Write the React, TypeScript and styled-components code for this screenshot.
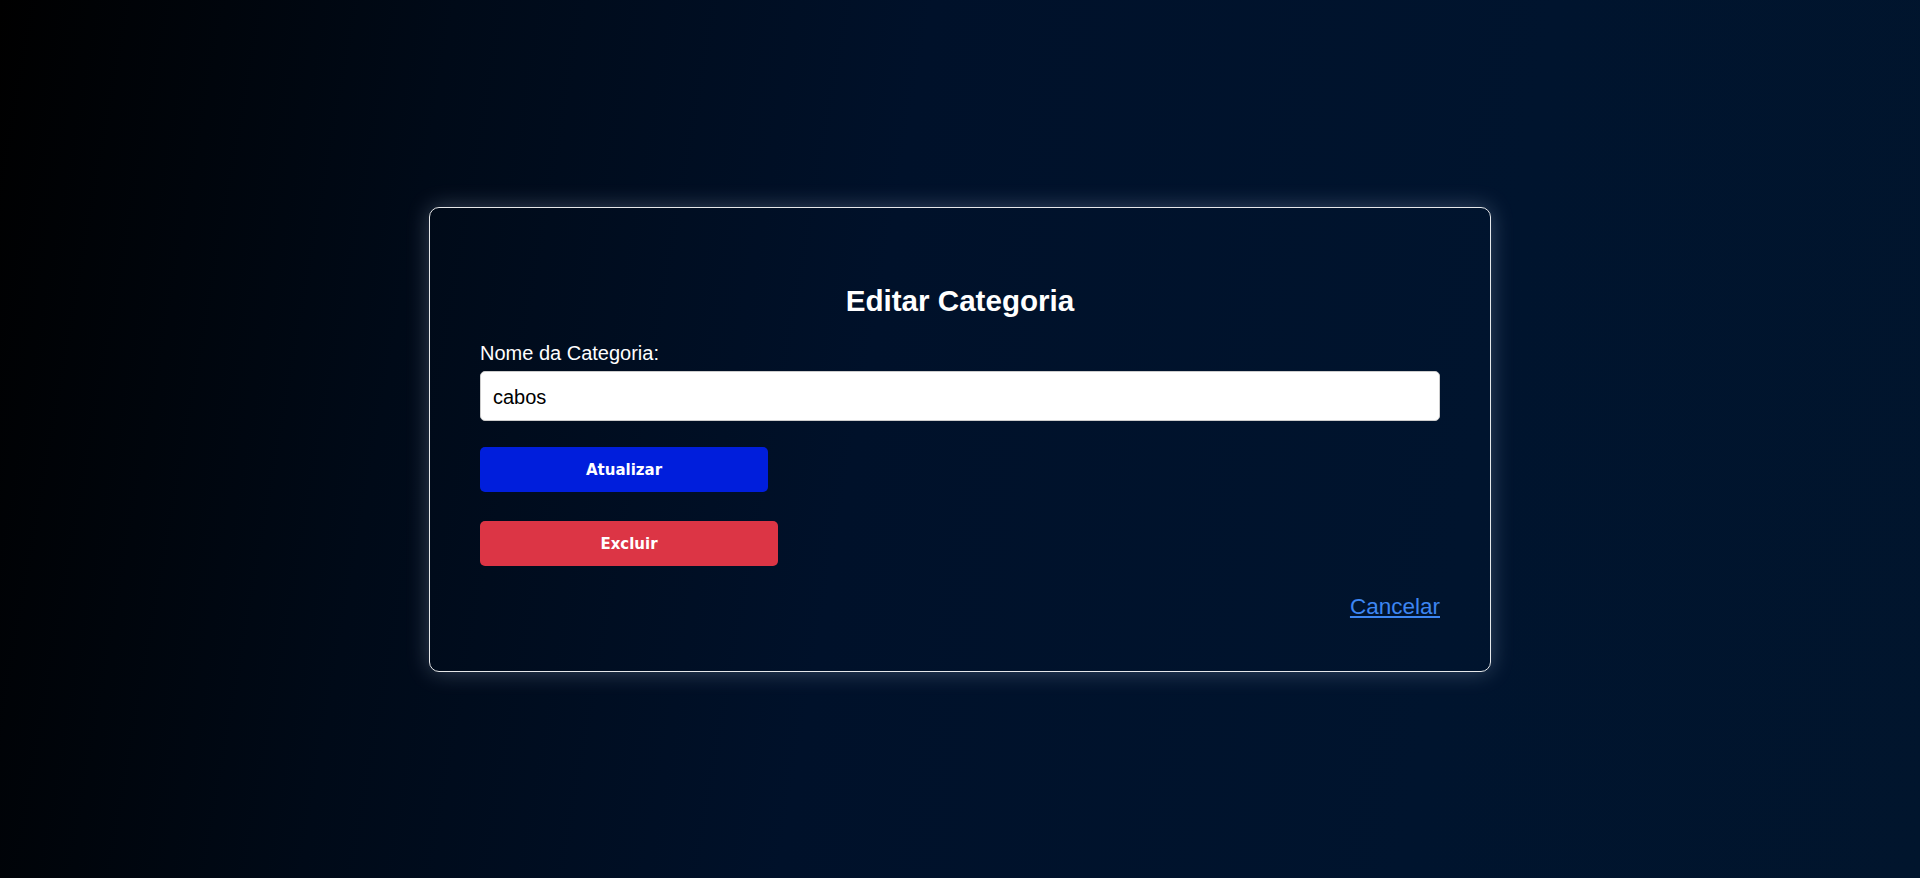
import React from "react";
import styled, { createGlobalStyle } from "styled-components";

const Global = createGlobalStyle`
  html, body { margin: 0; padding: 0; }
  body {
    font-family: "Liberation Sans", Arial, sans-serif;
    background: linear-gradient(100deg, #000000 0%, #000a18 22%, #00112a 45%, #00142e 75%, #01152d 100%);
    min-height: 100vh;
    color: #fff;
  }
`;

const Page = styled.main`
  min-height: 100vh;
  display: flex;
  align-items: center;
  justify-content: center;
`;

const Card = styled.section`
  width: 960px;
  padding: 50px;
  border: 1px solid rgba(255, 255, 255, 0.9);
  border-radius: 10px;
  box-shadow: 0 0 22px rgba(190, 210, 240, 0.28);
  display: flex;
  flex-direction: column;
`;

const Title = styled.h2`
  margin: 26px 0 25px;
  font-size: 29.6px;
  line-height: 33px;
  font-weight: 700;
  text-align: center;
  color: #fff;
`;

const Label = styled.label`
  display: block;
  font-size: 20px;
  line-height: 23px;
  margin-bottom: 6px;
  color: #fff;
`;

const Input = styled.input`
  box-sizing: border-box;
  width: 100%;
  height: 50px;
  padding: 4px 12px 0;
  border: 1px solid #ccc;
  border-radius: 5px;
  background: #fff;
  color: #000;
  font-family: "Liberation Sans", Arial, sans-serif;
  font-size: 20px;
  outline: none;
`;

const Button = styled.button<{ $variant: "primary" | "danger"; $width: number; $top: number }>`
  width: ${(p) => p.$width}px;
  height: 45px;
  margin-top: ${(p) => p.$top}px;
  border: none;
  border-radius: 5px;
  background: ${(p) => (p.$variant === "primary" ? "#001edc" : "#dc3545")};
  color: #fff;
  font-family: "DejaVu Sans", Verdana, sans-serif;
  font-weight: 700;
  font-size: 15px;
  padding-top: 2px;
  cursor: pointer;
`;

const Footer = styled.div`
  display: flex;
  justify-content: flex-end;
  margin-top: 28px;
  padding-bottom: 2px;
`;

const CancelLink = styled.a`
  font-size: 22.5px;
  line-height: 25px;
  color: #3d86f2;
  text-decoration: underline;
  cursor: pointer;
`;

export default function App() {
  return (
    <>
      <Global />
      <Page>
        <Card>
          <Title>Editar Categoria</Title>
          <Label htmlFor="nome">Nome da Categoria:</Label>
          <Input id="nome" defaultValue="cabos" />
          <div>
            <Button $variant="primary" $width={288} $top={26}>Atualizar</Button>
          </div>
          <div>
            <Button $variant="danger" $width={298} $top={29}>Excluir</Button>
          </div>
          <Footer>
            <CancelLink href="#">Cancelar</CancelLink>
          </Footer>
        </Card>
      </Page>
    </>
  );
}
